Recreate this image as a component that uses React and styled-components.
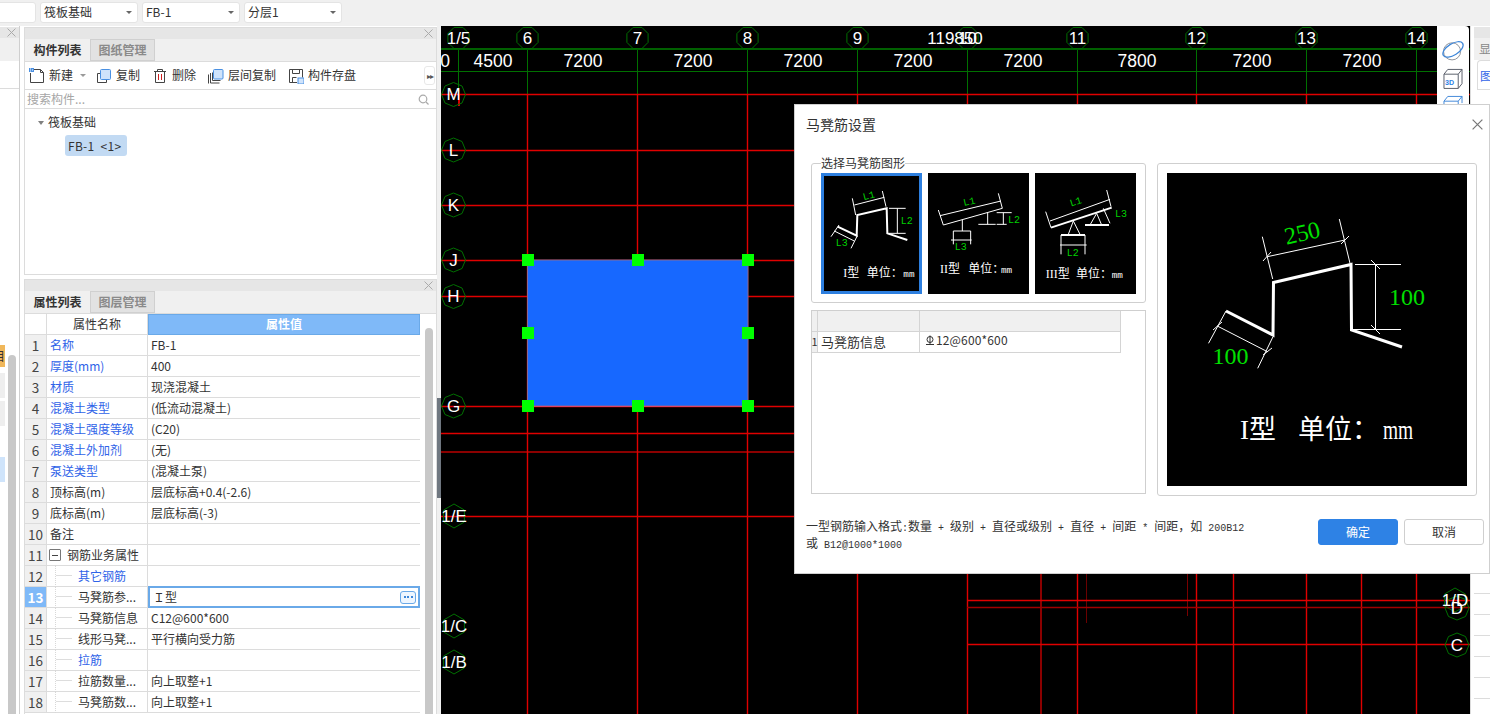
import React from "react";
import styled, { createGlobalStyle } from "styled-components";

const FONT = `"Noto Sans CJK SC", "Noto Sans", sans-serif`;
const SERIF = `"Liberation Serif", "Noto Sans CJK SC", serif`;
const MONO = `"Liberation Mono", "Noto Sans CJK SC", monospace`;
const LINK = "#2f63e8";
const LINE = "#dcdcdc";

const GlobalStyle = createGlobalStyle`
  html, body { margin: 0; padding: 0; overflow: hidden; background: #f0f0f0; }
  body { font: 12px/1.2 ${FONT}; color: #333; }
  * { box-sizing: border-box; }
`;

const Shell = styled.div`
  position: relative;
  width: 1490px;
  height: 714px;
  overflow: hidden;
  display: flex;
  flex-direction: column;
`;

const TopBar = styled.div`
  height: 26px;
  flex: none;
  display: flex;
  align-items: flex-start;
  gap: 4px;
  padding-top: 2px;
  margin-left: -62px;
`;

const Combo = styled.div`
  width: 98px;
  height: 21px;
  background: #fff;
  border: 1px solid #e4e4e4;
  border-radius: 3px;
  display: flex;
  align-items: center;
  justify-content: space-between;
  padding: 0 5px 0 3px;
  &::after {
    content: "";
    border: 3px solid transparent;
    border-top: 3px solid #666;
    margin-top: 3px;
  }
`;

const Main = styled.div`
  flex: 1;
  min-height: 0;
  display: flex;
`;

const LeftRail = styled.div`
  width: 20px;
  flex: none;
  padding-top: 1px;
  border-right: 1px solid #cfcfcf;
  background: #fff;
  display: flex;
  flex-direction: column;
`;

const RailTabsGap = styled.div`
  height: 23px;
  flex: none;
  background: #f0f0f0;
  border-bottom: 1px solid #f0f0f0;
`;

const RailBody = styled.div`
  flex: 1;
  display: flex;
  margin-top: 27px;
  border-top: 1px solid ${LINE};
`;

const RailItems = styled.div`
  width: 5px;
  display: flex;
  flex-direction: column;
  padding-top: 256px;
`;

const RailItem = styled.div`
  height: ${(p) => p.$h}px;
  margin-top: ${(p) => p.$top}px;
  background: ${(p) => p.$bg};
  overflow: hidden;
  font-size: 12px;
  line-height: 22px;
  direction: rtl;
`;

const RailScroll = styled.div`
  width: 8px;
  margin: 266px 0 0 3px;
  background: #c8c8c8;
  border-radius: 4px 4px 0 0;
`;

const RailGap = styled.div`
  width: 4px;
  flex: none;
  background: #fff;
`;

const PanelColumn = styled.div`
  width: 413px;
  flex: none;
  padding-top: 1px;
  display: flex;
  flex-direction: column;
  gap: 4px;
  background: #fff;
`;

const Panel = styled.section`
  flex: ${(p) => (p.$grow ? 1 : "none")};
  height: ${(p) => (p.$grow ? "auto" : "248px")};
  min-height: 0;
  display: flex;
  flex-direction: column;
  border: 1px solid ${LINE};
  border-bottom: ${(p) => (p.$grow ? "none" : `1px solid ${LINE}`)};
  background: #fff;
  overflow: hidden;
`;

const PanelHead = styled.div`
  height: 11px;
  flex: none;
  background: #e6e6e6;
  color: #a8a8a8;
  display: flex;
  align-items: center;
  justify-content: flex-end;
  padding-right: 3px;
`;

const TabBar = styled.div`
  height: 23px;
  flex: none;
  display: flex;
  background: #f0f0f0;
  border-bottom: 1px solid ${LINE};
`;

const Tab = styled.div`
  width: 65px;
  display: flex;
  align-items: center;
  justify-content: center;
  font-weight: 700;
  color: ${(p) => (p.$active ? "#333" : "#8a8a8a")};
  background: ${(p) => (p.$active ? "#f0f0f0" : "#e2e2e2")};
  border: ${(p) => (p.$active ? "none" : "1px solid #d0d0d0")};
  border-left: ${(p) => (p.$active ? "none" : "1px solid #d0d0d0")};
`;

const Toolbar = styled.div`
  height: 28px;
  flex: none;
  display: flex;
  align-items: center;
  gap: 12px;
  padding: 0 1px 0 4px;
  border-bottom: 1px solid ${LINE};
`;

const ToolButton = styled.div`
  display: flex;
  align-items: center;
  gap: 4px;
  font-size: 12px;
  color: #333;
`;

const Caret = styled.span`
  border: 3px solid transparent;
  border-top: 3px solid #9a9a9a;
  margin: 3px -2px 0 3px;
`;

const MoreButton = styled.div`
  width: 11px;
  height: 19px;
  margin-left: auto;
  border: 1px solid #e8e8e8;
  border-radius: 3px;
  font-size: 8px;
  letter-spacing: -1px;
  line-height: 17px;
  text-align: center;
  color: #555;
`;

const Search = styled.div`
  height: 19px;
  flex: none;
  display: flex;
  align-items: center;
  justify-content: space-between;
  padding: 0 7px 0 2px;
  color: #a6a6a6;
  border-bottom: 1px solid ${LINE};
`;

const Tree = styled.div`
  flex: 1;
  padding: 4px 0 0 13px;
`;

const TreeRow = styled.div`
  height: 18px;
  display: flex;
  align-items: center;
  gap: 4px;
  color: #333;
  &::before {
    content: "";
    border: 3px solid transparent;
    border-top: 4px solid #808080;
    margin-top: 4px;
  }
`;

const TreeLeaf = styled.div`
  width: 62px;
  height: 21px;
  margin: 4px 0 0 27px;
  padding-left: 3px;
  background: #c2daf3;
  border-radius: 3px;
  line-height: 21px;
  letter-spacing: 0.3px;
  white-space: pre;
`;

const TableArea = styled.div`
  flex: 1;
  min-height: 0;
  display: flex;
  overflow: hidden;
`;

const Table = styled.div`
  width: 395px;
  flex: none;
`;

const Row = styled.div`
  height: 21px;
  display: grid;
  grid-template-columns: 22px 101px 272px;
  border-bottom: 1px solid ${LINE};
`;

const NumCell = styled.div`
  display: flex;
  align-items: center;
  justify-content: center;
  font-size: ${(p) => (p.$head ? 12 : 13.5)}px;
  font-weight: ${(p) => (p.$selected ? 700 : 400)};
  color: ${(p) => (p.$selected ? "#fff" : "#444")};
  background: ${(p) => (p.$head ? "#fff" : p.$selected ? "#7fb9f8" : "#f0f0f0")};
  border-right: 1px solid ${LINE};
`;

const NameCell = styled.div`
  position: relative;
  display: flex;
  align-items: center;
  padding-left: ${(p) => (p.$head ? 0 : p.$depth === 2 ? 31 : p.$depth === 1 ? 2 : 3)}px;
  justify-content: ${(p) => (p.$head ? "center" : "flex-start")};
  color: ${(p) => (p.$link ? LINK : "#333")};
  white-space: nowrap;
  border-right: 1px solid ${LINE};
  ${(p) =>
    p.$depth === 2 &&
    `&::before {
      content: "";
      position: absolute;
      left: 8px;
      top: -1px;
      bottom: -1px;
      border-left: 1px dotted #d8d8d8;
    }
    &::after {
      content: "";
      position: absolute;
      left: 9px;
      top: 9px;
      width: 16px;
      border-top: 1px solid #dddddd;
    }`}
`;

const ValueCell = styled.div`
  display: flex;
  align-items: center;
  padding-left: 3px;
  white-space: nowrap;
`;

const HeadValue = styled.div`
  display: flex;
  align-items: center;
  justify-content: center;
  color: #fff;
  font-weight: 700;
  background: #7fb9f8;
  border: 1px solid #6aa9e8;
  margin-bottom: -1px;
`;

const EditCell = styled.div`
  display: flex;
  align-items: center;
  justify-content: space-between;
  padding: 0 2px 0 3px;
  margin: -1px 0;
  height: 22px;
  border: 2px solid #6aa9e8;
`;

const EditButton = styled.div`
  width: 16px;
  height: 13px;
  border: 1px solid #6aa9e8;
  border-radius: 3px;
  background: #eef6ff;
  display: flex;
  align-items: center;
  justify-content: center;
  gap: 1.5px;
  & > i {
    width: 2px;
    height: 2px;
    background: #3d86d8;
  }
`;

const Collapse = styled.span`
  width: 12px;
  height: 12px;
  border: 1px solid #777;
  border-radius: 1px;
  display: inline-flex;
  align-items: center;
  justify-content: center;
  margin-right: 6px;
  &::before {
    content: "";
    width: 6px;
    border-top: 1px solid #444;
  }
`;

const TableScroll = styled.div`
  width: 8px;
  margin: 14px 0 0 5px;
  background: #c8c8c8;
  border-radius: 4px 4px 0 0;
`;

const Splitter = styled.div`
  width: 4px;
  flex: none;
  background: #f0f0f0;
`;

const SplitterGrip = styled.div`
  height: 100px;
  margin-top: 372px;
  background: #6f7780;
`;

const Canvas = styled.div`
  position: relative;
  flex: 1;
  background: #000;
  overflow: hidden;
  & > svg {
    display: block;
  }
`;

const AxisText = styled.text`
  fill: #fff;
  font: 17px "Liberation Sans", sans-serif;
  text-anchor: middle;
  dominant-baseline: central;
`;

const DimText = styled.text`
  fill: #fff;
  font: 17.5px "Liberation Sans", sans-serif;
  text-anchor: middle;
`;

const FloatTools = styled.div`
  position: absolute;
  right: 1px;
  top: 0;
  width: 32px;
  height: 82px;
  background: #fff;
  border-radius: 0 4px 0 0;
  display: flex;
  flex-direction: column;
  align-items: center;
  gap: 6px;
  padding-top: 13px;
`;

const RightDock = styled.div`
  width: 20px;
  flex: none;
  background: #fff;
  padding-left: 3px;
  display: flex;
  flex-direction: column;
  border-left: 1px solid #dcdcdc;
`;

const DockHead = styled.div`
  height: 11px;
  margin-top: 1px;
  flex: none;
  background: #e6e6e6;
`;

const DockTab = styled.div`
  height: 22px;
  flex: none;
  background: #f0f0f0;
  padding-left: 5px;
  line-height: 22px;
  color: #888;
  overflow: hidden;
  white-space: nowrap;
`;

const DockActive = styled.div`
  height: 30px;
  flex: none;
  margin-left: 3px;
  padding-left: 2px;
  line-height: 30px;
  color: ${LINK};
  border: 1px solid ${LINE};
  border-right: none;
  border-radius: 4px 0 0 0;
  overflow: hidden;
  white-space: nowrap;
`;

const DockGrid = styled.div`
  flex: 1;
  background: repeating-linear-gradient(
    to bottom,
    #fff 0,
    #fff 20px,
    ${LINE} 20px,
    ${LINE} 21px
  );
`;

const Dialog = styled.div`
  position: absolute;
  left: 794px;
  top: 104px;
  width: 696px;
  height: 470px;
  background: #fff;
  border: 1px solid #cfcfcf;
  display: flex;
  flex-direction: column;
`;

const DialogHead = styled.div`
  height: 38px;
  flex: none;
  display: flex;
  align-items: center;
  justify-content: space-between;
  padding: 0 6px 0 11px;
  font-size: 14px;
`;

const DialogBody = styled.div`
  display: flex;
  gap: 11px;
  padding: 20px 0 0 16px;
`;

const DialogLeft = styled.div`
  width: 335px;
  flex: none;
  margin-top: -8px;
  display: flex;
  flex-direction: column;
  gap: 7px;
`;

const ShapeGroup = styled.fieldset`
  height: 148px;
  margin: 0;
  padding: 2px 9px 0;
  border: 1px solid #cfcfcf;
  border-radius: 3px;
  min-width: 0;
`;

const ShapeLegend = styled.legend`
  padding: 0;
  font-size: 12px;
  line-height: 16px;
`;

const Thumbs = styled.div`
  display: flex;
  gap: 6px;
`;

const Thumb = styled.div`
  width: 101px;
  height: 121px;
  background: #000;
  outline: ${(p) => (p.$active ? "3px solid #2d7fdf" : "none")};
  outline-offset: -3px;
  & > svg {
    display: block;
  }
`;

const InfoBox = styled.div`
  height: 184px;
  border: 1px solid #cfcfcf;
`;

const InfoRow = styled.div`
  width: 309px;
  height: 21px;
  display: grid;
  grid-template-columns: 6px 102px 201px;
  background: ${(p) => (p.$head ? "#f0f0f0" : "#fff")};
  border-bottom: 1px solid #d4d4d4;
  & > div {
    display: flex;
    align-items: center;
    border-right: 1px solid #d4d4d4;
    white-space: nowrap;
  }
`;

const InfoIndex = styled.div`
  background: #f0f0f0;
  font-size: 11px;
  justify-content: center;
`;

const InfoName = styled.div`
  font-size: 13px;
  padding-left: 3px;
`;

const InfoValue = styled.div`
  padding: 0 0 3px 5px;
  gap: 1px;
  letter-spacing: 0.15px;
`;

const Preview = styled.div`
  width: 320px;
  height: 333px;
  flex: none;
  padding: 9px;
  border: 1px solid #cfcfcf;
  border-radius: 3px;
  & > svg {
    display: block;
    background: #000;
  }
`;

const DialogFoot = styled.div`
  display: flex;
  justify-content: space-between;
  align-items: flex-start;
  margin-top: 23px;
  padding: 0 5px 0 11px;
`;

const Hint = styled.div`
  width: 446px;
  font-size: 12px;
  line-height: 14px;
  color: #333;
`;

const Ascii = styled.span`
  font-family: ${MONO};
  font-size: 10px;
  white-space: pre;
`;

const FootButtons = styled.div`
  display: flex;
  gap: 6px;
`;

const ActionButton = styled.div`
  width: 80px;
  height: 26px;
  display: flex;
  align-items: center;
  justify-content: center;
  border-radius: 3px;
  color: ${(p) => (p.$primary ? "#fff" : "#333")};
  background: ${(p) => (p.$primary ? "#2e82e5" : "#fff")};
  border: 1px solid ${(p) => (p.$primary ? "#2e82e5" : "#cfcfcf")};
`;

const SmallX = ({ size = 9, color = "#aaa" }) => (
  <svg width={size} height={size} viewBox="0 0 9 9">
    <path d="M.5.5l8 8M8.5.5l-8 8" stroke={color} fill="none" />
  </svg>
);

const NewIcon = () => (
  <svg width="16" height="16" viewBox="0 0 16 16" fill="none">
    <path d="M1.5 5v9.5h13V4.5l-3-3H4.5" stroke="#444" />
    <path d="M11.5 1.5v3h3" stroke="#444" />
    <rect x="0" y="0" width="5" height="4" fill="#4a90e2" />
    <path d="M1 1h1M3 2h1M1 3h1" stroke="#fff" />
  </svg>
);

const CopyIcon = () => (
  <svg width="16" height="16" viewBox="0 0 16 16" fill="none">
    <path d="M4.5 5.5h-3v9h9v-3" stroke="#444" />
    <rect x="4.5" y="1.5" width="10" height="10" rx="1" fill="#cfe3fb" stroke="#4a90e2" />
  </svg>
);

const TrashIcon = () => (
  <svg width="16" height="16" viewBox="0 0 16 16" fill="none">
    <path d="M2 3.5h12M5.5 3.5v-2h5v2M3.5 3.5v11h9v-11" stroke="#444" />
    <path d="M6.5 6v6M9.5 6v6" stroke="#d02020" />
  </svg>
);

const LayerCopyIcon = () => (
  <svg width="16" height="16" viewBox="0 0 16 16" fill="none">
    <path d="M2.5 5v10h9M.5 6.5v9" stroke="#444" />
    <path d="M4.5 4.5v8h8" stroke="#444" />
    <rect x="5.5" y="1.5" width="9.5" height="9.5" rx="1" fill="#cfe3fb" stroke="#4a90e2" />
  </svg>
);

const SaveIcon = () => (
  <svg width="16" height="16" viewBox="0 0 16 16" fill="none">
    <path d="M9 14.5H1.5v-13h13v8" stroke="#444" />
    <path d="M4.5 14.5v-5h4M4.5 1.5v4h7v-4" stroke="#444" />
    <rect x="10" y="10" width="6" height="6" fill="#cfe3fb" stroke="#4a90e2" />
  </svg>
);

const SearchIcon = () => (
  <svg width="11" height="11" viewBox="0 0 11 11" fill="none">
    <circle cx="5" cy="5" r="3.8" stroke="#aaa" strokeWidth="1.2" />
    <path d="M8 8l2.5 2.5" stroke="#aaa" strokeWidth="1.3" />
  </svg>
);

const RebarSymbol = () => (
  <svg width="10" height="11" viewBox="0 0 10 11" fill="none" stroke="#333">
    <circle cx="5" cy="4.5" r="3" />
    <path d="M5 .5v9M1 9.5h8" />
  </svg>
);

const OrbitIcon = () => (
  <svg width="24" height="24" viewBox="0 0 24 24" fill="none">
    <circle cx="11" cy="13" r="9" stroke="#8a8f98" />
    <ellipse cx="12" cy="11" rx="12" ry="6" transform="rotate(-32 12 11)" stroke="#3d86d8" strokeWidth="1.3" />
  </svg>
);

const CubeIcon = () => (
  <svg width="22" height="22" viewBox="0 0 22 22" fill="none" stroke="#555b66">
    <path d="M1.5 6.5h15v15h-15zM1.5 6.5l4-5h15v15l-4 5M16.5 6.5l4-5" />
    <text x="2.5" y="18" fontSize="7.5" fontWeight="700" fill="#2e82e5" stroke="none" fontFamily="Liberation Sans">3D</text>
  </svg>
);

const BoxIcon = () => (
  <svg width="22" height="14" viewBox="0 0 22 14" fill="none">
    <path d="M1.5 6.5l4-5h15l-4 5h-15zM1.5 6.5v7M16.5 6.5v7M20.5 1.5v7" stroke="#3d86d8" />
  </svg>
);

const COLUMN_AXES = [
  ["1/5", 458.5],
  ["6", 527.5],
  ["7", 637.5],
  ["8", 747.5],
  ["9", 857.5],
  ["10", 967.5],
  ["11", 1077.5],
  ["12", 1196.5],
  ["13", 1306.5],
  ["14", 1416.5],
];

const ROW_AXES = [
  ["M", 453.5, 94.5],
  ["L", 453.5, 150],
  ["K", 453.5, 205],
  ["J", 453.5, 260],
  ["H", 453.5, 296.5],
  ["G", 453.5, 406],
  ["1/E", 454, 516],
  ["1/C", 454, 626],
  ["1/B", 454, 662],
  ["D", 1457, 608],
  ["1/D", 1455, 600],
  ["C", 1457, 645],
];

const DIMENSIONS = [
  ["0", 445],
  ["4500", 493],
  ["7200", 583],
  ["7200", 693],
  ["7200", 803],
  ["7200", 913],
  ["7200", 1023],
  ["7800", 1137],
  ["7200", 1252],
  ["7200", 1362],
];

const HANDLES = [
  [527.5, 259.5],
  [637.5, 259.5],
  [747.5, 259.5],
  [527.5, 333],
  [747.5, 333],
  [527.5, 406],
  [637.5, 406],
  [747.5, 406],
];

const polygon = (cx, cy, r, n, turn = 0) =>
  Array.from({ length: n }, (_, i) => {
    const a = (i / n) * Math.PI * 2 + turn;
    return `${(cx + Math.cos(a) * r).toFixed(1)},${(cy + Math.sin(a) * r).toFixed(1)}`;
  }).join(" ");

const CadDrawing = () => (
  <svg width="1029" height="688" viewBox="441 26 1029 688">
    <g shapeRendering="crispEdges" fill="none">
      {COLUMN_AXES.map(([name, x]) => (
        <line key={name} x1={x} y1="49" x2={x} y2="94" stroke="#007000" />
      ))}
      <line x1="458.5" y1="94" x2="458.5" y2="106" stroke="#d80000" strokeWidth="2" />
      <line x1="1041" y1="570" x2="1041" y2="714" stroke="#8b0000" strokeWidth="2" />
      <line x1="1086.5" y1="570" x2="1086.5" y2="623" stroke="#6a0000" />
      <line x1="1187.5" y1="570" x2="1187.5" y2="616" stroke="#7a0000" />
      <line x1="441" y1="452" x2="1470" y2="452" stroke="#8b0000" strokeWidth="2" />
      <line x1="441" y1="49" x2="1470" y2="49" stroke="#006000" strokeWidth="2" />
      <line x1="441" y1="71.5" x2="1470" y2="71.5" stroke="#007000" />
    </g>
    <g fill="none" stroke="#e00000" strokeWidth="1.4">
      {[527.5, 637.5, 747.5, 857.5, 967.5, 1077.5, 1196.5, 1306.5, 1416.5].map((x) => (
        <line key={x} x1={x} y1="94" x2={x} y2="714" />
      ))}
      <line x1="1233.5" y1="570" x2="1233.5" y2="714" />
      <line x1="1361.5" y1="570" x2="1361.5" y2="714" />
      {[94.5, 150.5, 205.5, 260.5, 296.5, 406.5, 433.5, 516.5].map((y) => (
        <line key={y} x1="441" y1={y} x2="1470" y2={y} />
      ))}
      <line x1="967" y1="600.5" x2="1470" y2="600.5" />
      <line x1="967" y1="607.5" x2="1470" y2="607.5" stroke="#a00000" />
      <line x1="967" y1="644.5" x2="1470" y2="644.5" />
    </g>
    <rect x="527.5" y="260" width="220.5" height="146" fill="#1768ff" stroke="#8a6a90" />
    <line x1="527" y1="406.5" x2="748" y2="406.5" stroke="#e04060" />
    {HANDLES.map(([x, y]) => (
      <rect key={`${x}-${y}`} x={x - 6} y={y - 6} width="12" height="12" fill="#00ff00" shapeRendering="crispEdges" />
    ))}
    {COLUMN_AXES.map(([name, x]) => (
      <polygon key={name} points={polygon(x, 38, 11.5, 8, Math.PI / 8)} fill="none" stroke="#007000" />
    ))}
    {ROW_AXES.map(([name, x, y]) => (
      <polygon key={name} points={polygon(x, y, 12, name.length > 1 ? 6 : 8, Math.PI / 2)} fill="none" stroke="#007000" />
    ))}
    {DIMENSIONS.map(([value, x], i) => (
      <DimText key={i} x={x} y="67">{value}</DimText>
    ))}
    <AxisText x="955" y="38">119850</AxisText>
    {COLUMN_AXES.map(([name, x]) => (
      <AxisText key={name} x={x} y="38">{name}</AxisText>
    ))}
    {ROW_AXES.map(([name, x, y]) => (
      <AxisText key={name} x={x} y={y}>{name}</AxisText>
    ))}
  </svg>
);

const ThumbLabel = styled.text`
  fill: #00d000;
  font: 30px ${MONO};
  text-anchor: middle;
  dominant-baseline: central;
`;

const ThumbCaption = styled.text`
  fill: #fff;
  font: 36px ${SERIF};
`;

const CaptionUnit = styled.tspan`
  font: 28px ${MONO};
`;

const Lines = ({ points, width = 3 }) => (
  <g stroke="#fff" strokeWidth={width} fill="none">
    {points.map((d, i) => (
      <path key={i} d={d} />
    ))}
  </g>
);

// caption offsets are the x of the type name, the unit word and "mm"
const Caption = ({ type, y, at }) => (
  <ThumbCaption y={y}>
    <tspan x={at[0]}>{type}型</tspan>
    <tspan x={at[1]}>单位：</tspan>
    <CaptionUnit x={at[2]}>mm</CaptionUnit>
  </ThumbCaption>
);

const ThumbOne = () => (
  <svg width="101" height="121" viewBox="18 24 303 363">
    <Lines width={6} points={["M68 185L125 212L127 150L215 130L217 205L277 225"]} />
    <Lines
      points={[
        "M118 120L208 97M112 100L122 150M202 78L213 125",
        "M222 130H272M222 205H272M247 130V205",
        "M58 198L118 228M72 180L48 215M127 212L108 250",
      ]}
    />
    <ThumbLabel x="162" y="94" transform="rotate(-15 162 94)">L1</ThumbLabel>
    <ThumbLabel x="275" y="168">L2</ThumbLabel>
    <ThumbLabel x="80" y="236">L3</ThumbLabel>
    <Caption type="I" y={335} at={[85, 155, 265]} />
  </svg>
);

const ThumbTwo = () => (
  <svg width="101" height="121" viewBox="9 24 303 363">
    <Lines
      points={[
        "M45 152L228 108M55 180L232 130M40 135L55 180M220 85L232 130",
        "M112 165V198M85 198H137M85 198V238M137 198V238M78 225H140",
        "M188 143V178M160 178H212M215 143H260M215 178H245M235 143V178",
      ]}
    />
    <ThumbLabel x="133" y="112" transform="rotate(-13 133 112)">L1</ThumbLabel>
    <ThumbLabel x="267" y="165">L2</ThumbLabel>
    <ThumbLabel x="107" y="247">L3</ThumbLabel>
    <Caption type="II" y={324} at={[45, 130, 228]} />
  </svg>
);

const ThumbThree = () => (
  <svg width="101" height="121" viewBox="330 24 303 363">
    <Lines width={6} points={["M378 188L560 128", "M408 210H480", "M480 180H552"]} />
    <Lines
      points={[
        "M375 168L555 103M362 140L378 188M545 75L558 125",
        "M445 168L430 208M445 168L465 208M408 210V268M480 210V268M405 240H485",
        "M515 145L495 180M515 145L530 180M535 130L555 175",
      ]}
    />
    <ThumbLabel x="453" y="112" transform="rotate(-18 453 112)">L1</ThumbLabel>
    <ThumbLabel x="443" y="265">L2</ThumbLabel>
    <ThumbLabel x="588" y="148">L3</ThumbLabel>
    <Caption type="III" y={338} at={[362, 453, 560]} />
  </svg>
);

const PreviewNumber = styled.text`
  fill: #00e000;
  font: 24px ${SERIF};
  text-anchor: middle;
`;

const PreviewCaption = styled.text`
  fill: #fff;
  font: 27px ${SERIF};
`;

const PreviewDrawing = () => (
  <svg width="300" height="313" viewBox="1167 173 300 313">
    <Lines width={3} points={["M1226 311L1273 335L1273.5 282.5L1351 264.5L1351.5 330L1402 347"]} />
    <Lines
      width={1}
      points={[
        "M1267.3 256.7L1345 240M1262.3 236.7L1272.7 279M1339.3 219L1350 263.3",
        "M1263 261L1271 252M1341 244L1349 236",
        "M1355 264.5H1401M1351.5 329.5H1401M1375.5 264.5V329M1371 260L1380 269M1371 325L1380 334",
        "M1217.3 326L1267.4 351.7M1226 311L1208.5 343.3M1273 336.7L1257.7 368.3",
        "M1213 330L1222 322M1263 355L1272 348",
      ]}
    />
    <PreviewNumber x="1302" y="241" transform="rotate(-13 1302 232)">250</PreviewNumber>
    <PreviewNumber x="1407" y="305">100</PreviewNumber>
    <PreviewNumber x="1230.5" y="364">100</PreviewNumber>
    <PreviewCaption x="1240" y="439">I型</PreviewCaption>
    <PreviewCaption x="1298" y="439">单位：</PreviewCaption>
    <PreviewCaption transform="translate(1383 439) scale(0.72 1)">mm</PreviewCaption>
  </svg>
);

const PROPERTIES = [
  { name: "名称", value: "FB-1", link: true },
  { name: "厚度(mm)", value: "400", link: true },
  { name: "材质", value: "现浇混凝土", link: true },
  { name: "混凝土类型", value: "(低流动混凝土)", link: true },
  { name: "混凝土强度等级", value: "(C20)", link: true },
  { name: "混凝土外加剂", value: "(无)", link: true },
  { name: "泵送类型", value: "(混凝土泵)", link: true },
  { name: "顶标高(m)", value: "层底标高+0.4(-2.6)" },
  { name: "底标高(m)", value: "层底标高(-3)" },
  { name: "备注", value: "" },
  { name: "钢筋业务属性", value: "", depth: 1 },
  { name: "其它钢筋", value: "", depth: 2, link: true },
  { name: "马凳筋参...", value: "Ｉ型", depth: 2, selected: true },
  { name: "马凳筋信息", value: "C12@600*600", depth: 2 },
  { name: "线形马凳...", value: "平行横向受力筋", depth: 2 },
  { name: "拉筋", value: "", depth: 2, link: true },
  { name: "拉筋数量...", value: "向上取整+1", depth: 2 },
  { name: "马凳筋数...", value: "向上取整+1", depth: 2 },
];

const PropertyRow = ({ index, item }) => (
  <Row>
    <NumCell $selected={item.selected}>{index}</NumCell>
    <NameCell $link={item.link} $depth={item.depth}>
      {item.depth === 1 && <Collapse />}
      {item.name}
    </NameCell>
    {item.selected ? (
      <EditCell>
        {item.value}
        <EditButton>
          <i />
          <i />
          <i />
        </EditButton>
      </EditCell>
    ) : (
      <ValueCell>{item.value}</ValueCell>
    )}
  </Row>
);

const App = () => (
  <Shell>
    <GlobalStyle />
    <TopBar>
      <Combo />
      <Combo>筏板基础</Combo>
      <Combo>FB-1</Combo>
      <Combo>分层1</Combo>
    </TopBar>
    <Main>
      <LeftRail>
        <PanelHead>
          <SmallX />
        </PanelHead>
        <RailTabsGap />
        <RailBody>
          <RailItems>
            <RailItem $h={22} $top={0} $bg="#f0b75a">目</RailItem>
            <RailItem $h={25} $top={6} $bg="#eeeeee" />
            <RailItem $h={25} $top={3} $bg="#eeeeee" />
            <RailItem $h={25} $top={31} $bg="#cfe4fb" />
          </RailItems>
          <RailScroll />
        </RailBody>
      </LeftRail>
      <RailGap />
      <PanelColumn>
        <Panel>
          <PanelHead>
            <SmallX />
          </PanelHead>
          <TabBar>
            <Tab $active>构件列表</Tab>
            <Tab>图纸管理</Tab>
          </TabBar>
          <Toolbar>
            <ToolButton>
              <NewIcon />
              新建
              <Caret />
            </ToolButton>
            <ToolButton>
              <CopyIcon />
              复制
            </ToolButton>
            <ToolButton>
              <TrashIcon />
              删除
            </ToolButton>
            <ToolButton>
              <LayerCopyIcon />
              层间复制
            </ToolButton>
            <ToolButton>
              <SaveIcon />
              构件存盘
            </ToolButton>
            <MoreButton>▸▸</MoreButton>
          </Toolbar>
          <Search>
            搜索构件...
            <SearchIcon />
          </Search>
          <Tree>
            <TreeRow>筏板基础</TreeRow>
            <TreeLeaf>{"FB-1  <1>"}</TreeLeaf>
          </Tree>
        </Panel>
        <Panel $grow>
          <PanelHead>
            <SmallX />
          </PanelHead>
          <TabBar>
            <Tab $active>属性列表</Tab>
            <Tab>图层管理</Tab>
          </TabBar>
          <TableArea>
            <Table>
              <Row>
                <NumCell $head />
                <NameCell $head>属性名称</NameCell>
                <HeadValue>属性值</HeadValue>
              </Row>
              {PROPERTIES.map((item, i) => (
                <PropertyRow key={i} index={i + 1} item={item} />
              ))}
            </Table>
            <TableScroll />
          </TableArea>
        </Panel>
      </PanelColumn>
      <Splitter>
        <SplitterGrip />
      </Splitter>
      <Canvas>
        <CadDrawing />
        <FloatTools>
          <OrbitIcon />
          <CubeIcon />
          <BoxIcon />
        </FloatTools>
      </Canvas>
      <RightDock>
        <DockHead />
        <DockTab>显示</DockTab>
        <DockActive>图层</DockActive>
        <DockGrid />
      </RightDock>
    </Main>
    <Dialog>
      <DialogHead>
        马凳筋设置
        <SmallX size={11} color="#777" />
      </DialogHead>
      <DialogBody>
        <DialogLeft>
          <ShapeGroup>
            <ShapeLegend>选择马凳筋图形</ShapeLegend>
            <Thumbs>
              <Thumb $active>
                <ThumbOne />
              </Thumb>
              <Thumb>
                <ThumbTwo />
              </Thumb>
              <Thumb>
                <ThumbThree />
              </Thumb>
            </Thumbs>
          </ShapeGroup>
          <InfoBox>
            <InfoRow $head>
              <div />
              <div />
              <div />
            </InfoRow>
            <InfoRow>
              <InfoIndex>1</InfoIndex>
              <InfoName>马凳筋信息</InfoName>
              <InfoValue>
                <RebarSymbol />
                12@600*600
              </InfoValue>
            </InfoRow>
          </InfoBox>
        </DialogLeft>
        <Preview>
          <PreviewDrawing />
        </Preview>
      </DialogBody>
      <DialogFoot>
        <Hint>
          一型钢筋输入格式<Ascii>:</Ascii>数量<Ascii> + </Ascii>级别<Ascii> + </Ascii>直径或级别<Ascii> + </Ascii>直径<Ascii> + </Ascii>间距<Ascii> * </Ascii>间距，如<Ascii> 200B12</Ascii>
          <br />
          或<Ascii> B12@1000*1000</Ascii>
        </Hint>
        <FootButtons>
          <ActionButton $primary>确定</ActionButton>
          <ActionButton>取消</ActionButton>
        </FootButtons>
      </DialogFoot>
    </Dialog>
  </Shell>
);

export default App;
